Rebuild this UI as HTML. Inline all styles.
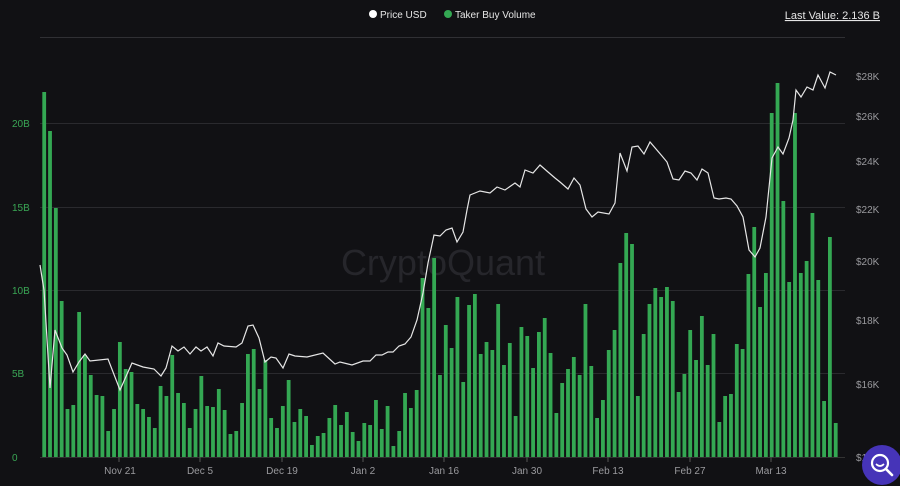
<!DOCTYPE html>
<html><head><meta charset="utf-8"><style>
html,body{margin:0;padding:0;background:#111114;}
body{width:900px;height:486px;overflow:hidden;font-family:"Liberation Sans",sans-serif;}
</style></head><body>
<svg width="900" height="486" xmlns="http://www.w3.org/2000/svg" style="display:block">
<rect width="900" height="486" fill="#111114"/>
<text x="443" y="275" text-anchor="middle" font-size="36" fill="#26262b" font-family="Liberation Sans">CryptoQuant</text>
<g stroke="#2a2a2e" stroke-width="1">
<line x1="40" y1="37.5" x2="845" y2="37.5" stroke="#303034"/>
<line x1="40" y1="123.5" x2="845" y2="123.5"/>
<line x1="40" y1="207.5" x2="845" y2="207.5"/>
<line x1="40" y1="290.5" x2="845" y2="290.5"/>
<line x1="40" y1="373.5" x2="845" y2="373.5"/>
<line x1="40" y1="457.5" x2="845" y2="457.5" stroke="#333"/>
</g>
<g id="bars" fill="#34a853"></g>
<polyline id="price" fill="none" stroke="#e6e6e6" stroke-width="1.2" points="40,265 44,290 50,388 55,330 62,348 67,355 73,372 79,362 85,354 90,361 108,359 120,390 132,363 143,367 154,369 161,376 166,368 172,346 178,351 184,347 190,354 196,347 201,351 207,347 213,356 218,343 224,346 236,347 242,343 248,326 253,325 259,338 265,362 271,357 276,358 283,368 289,354 295,356 307,357 323,353 335,364 340,362 352,365 363,361 370,361 376,355 382,355 388,352 393,352 399,346 405,344 411,337 417,320 423,293 428,263 434,235 440,236 446,230 452,228 457,242 463,232 467,210 470,195 480,191 490,193 497,187 505,190 515,183 520,187 525,170 533,173 540,165 548,172 555,178 560,182 568,189 574,178 580,185 586,209 592,217 598,212 609,214 615,203 620,153 627,171 632,147 638,146 644,154 650,142 662,156 667,162 673,179 679,180 685,171 691,173 697,180 702,169 708,173 714,198 719,199 726,198 731,199 737,206 743,217 749,250 755,257 760,248 766,217 772,158 778,147 783,154 789,138 793,120 796,90 801,97 807,87 813,90 818,75 825,88 830,72 836,75"/>
<g font-size="10" fill="#3aa655" text-anchor="start">
<text x="12" y="127">20B</text><text x="12" y="211">15B</text><text x="12" y="294">10B</text><text x="12" y="377">5B</text><text x="12" y="461">0</text>
</g>
<g font-size="10" fill="#9a9a9e">
<text x="856" y="80">$28K</text><text x="856" y="120">$26K</text><text x="856" y="165">$24K</text><text x="856" y="213">$22K</text><text x="856" y="265">$20K</text><text x="856" y="324">$18K</text><text x="856" y="388">$16K</text><text x="856" y="461">$14K</text>
</g>
<g font-size="10" fill="#9a9a9e" text-anchor="middle">
<text x="120" y="474">Nov 21</text><text x="200" y="474">Dec 5</text><text x="282" y="474">Dec 19</text><text x="363" y="474">Jan 2</text><text x="444" y="474">Jan 16</text><text x="527" y="474">Jan 30</text><text x="608" y="474">Feb 13</text><text x="690" y="474">Feb 27</text><text x="771" y="474">Mar 13</text>
</g>
<g stroke="#555" stroke-width="1"><line x1="119" y1="457" x2="119" y2="462"/><line x1="200" y1="457" x2="200" y2="462"/><line x1="282" y1="457" x2="282" y2="462"/><line x1="363" y1="457" x2="363" y2="462"/><line x1="444" y1="457" x2="444" y2="462"/><line x1="527" y1="457" x2="527" y2="462"/><line x1="608" y1="457" x2="608" y2="462"/><line x1="690" y1="457" x2="690" y2="462"/><line x1="771" y1="457" x2="771" y2="462"/></g>
<circle cx="373" cy="14" r="4" fill="#fff"/>
<text x="380" y="18" font-size="10" fill="#e6e6e6">Price USD</text>
<circle cx="448" cy="14" r="4" fill="#34a853"/>
<text x="455" y="18" font-size="10" fill="#e6e6e6">Taker Buy Volume</text>
<text x="880" y="19" font-size="11" fill="#e6e6e6" text-anchor="end" text-decoration="underline">Last Value: 2.136 B</text>
<circle cx="882" cy="465" r="20" fill="#4634b8"/>
<circle cx="880" cy="463" r="8" fill="none" stroke="#fff" stroke-width="2.2"/>
<line x1="886" y1="469" x2="892" y2="475" stroke="#fff" stroke-width="2.6" stroke-linecap="round"/>
<path d="M876 464 Q880 468 884 464" fill="none" stroke="#fff" stroke-width="1.6"/>
</svg>
<script>
var tops=[92,131,208,301,409,405,312,355,375,395,396,431,409,342,369,372,404,409,417,428,386,396,355,393,403,428,409,376,406,407,389,410,434,431,403,354,349,389,360,418,428,406,380,422,409,
416,445,436,433,418,405,425,412,432,441,423,425,400,429,406,446,431,393,408,390,278,308,258,375,325,348,297,382,305,294,354,342,350,304,365,343,416,327,336,368,332,318,353,413,
383,369,357,375,304,366,418,400,350,330,263,233,244,396,334,304,288,297,287,301,392,374,330,360,316,365,334,422,396,394,344,349,274,227,307,273,113,83,201,282,113,273,261,213,280,401,237,423];
var g=document.getElementById('bars'),s='';
for(var i=0;i<tops.length;i++){var x=42.3+i*5.82;s+='<rect x="'+x.toFixed(2)+'" y="'+tops[i]+'" width="3.8" height="'+(457-tops[i])+'"/>';}
g.innerHTML=s;
</script>
</body></html>
